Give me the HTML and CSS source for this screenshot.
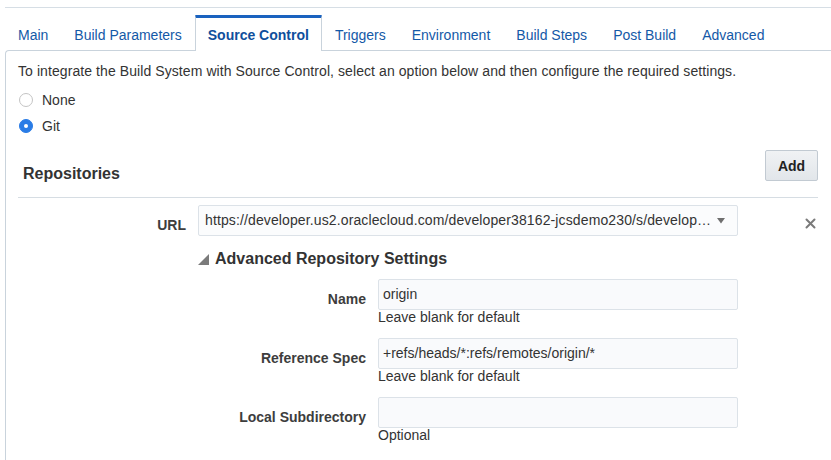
FILE: index.html
```html
<!DOCTYPE html>
<html lang="en">
<head>
<meta charset="utf-8">
<title>Source Control</title>
<link rel="stylesheet" href="styles.css">
</head>
<body>
<div class="topbar"></div>
<ul class="tabs">
  <li class="tab">Main</li>
  <li class="tab">Build Parameters</li>
  <li class="tab active">Source Control</li>
  <li class="tab">Triggers</li>
  <li class="tab">Environment</li>
  <li class="tab">Build Steps</li>
  <li class="tab">Post Build</li>
  <li class="tab">Advanced</li>
</ul>
<div class="panel">
  <p class="intro">To integrate the Build System with Source Control, select an option below and then configure the required settings.</p>
  <div class="radios">
    <label class="radio"><span class="dot"></span>None</label>
    <label class="radio"><span class="dot on"></span>Git</label>
  </div>
  <div class="section-head">
    <h2 class="section-title">Repositories</h2>
    <button class="btn">Add</button>
  </div>
  <div class="repo">
    <div class="url-row">
      <span class="label url-label">URL</span>
      <div class="select">
        <span class="select-text">https://developer.us2.oraclecloud.com/developer38162-jcsdemo230/s/develop…</span>
        <svg class="caret" width="8" height="6" viewBox="0 0 8 6"><polygon points="0,0 8,0 4,5.5" fill="#6f6f6f"/></svg>
      </div>
      <svg class="remove" width="11" height="11" viewBox="0 0 11 11"><path d="M1.5 1.5 L9.5 9.5 M9.5 1.5 L1.5 9.5" stroke="#7a7a7a" stroke-width="2" stroke-linecap="round"/></svg>
    </div>
    <div class="adv-head">
      <svg class="tri" width="11" height="11" viewBox="0 0 11 11"><polygon points="11,0 11,11 0,11" fill="#7b7b7b"/></svg>
      <span>Advanced Repository Settings</span>
    </div>
    <div class="field-row">
      <span class="label">Name</span>
      <div class="field">
        <div class="input">origin</div>
        <div class="help">Leave blank for default</div>
      </div>
    </div>
    <div class="field-row">
      <span class="label">Reference Spec</span>
      <div class="field">
        <div class="input">+refs/heads/*:refs/remotes/origin/*</div>
        <div class="help">Leave blank for default</div>
      </div>
    </div>
    <div class="field-row">
      <span class="label">Local Subdirectory</span>
      <div class="field">
        <div class="input"></div>
        <div class="help">Optional</div>
      </div>
    </div>
  </div>
</div>
</body>
</html>
```
FILE: styles.css
```css
* { box-sizing: border-box; }
html, body { margin: 0; padding: 0; background: #fff; }
body {
  font-family: "Liberation Sans", Arial, Helvetica, sans-serif;
  font-size: 14px;
  color: #333;
  overflow: hidden;
  width: 831px;
  height: 460px;
}
.topbar {
  height: 8px;
  margin-left: 5px;
  border-bottom: 1px solid #d6dee5;
}
.tabs {
  list-style: none;
  margin: 7px 0 0 5px;
  padding: 0;
  display: flex;
  position: relative;
  z-index: 1;
}
.tab {
  padding: 9px 12px 8px;
  line-height: 17px;
  color: #1459a7;
  border: 1px solid transparent;
  border-top: 3px solid transparent;
  border-bottom: none;
  height: 36px;
}
.tab.active {
  font-weight: bold;
  color: #0f4f9c;
  background: #fff;
  border-color: #c9d3dc;
  border-top-color: #1a62bf;
  border-radius: 1px 1px 0 0;
}
.panel {
  margin: -1px 0 0 5px;
  border-top: 1px solid #c9d3dc;
  border-left: 1px solid #c9d3dc;
  border-top-left-radius: 4px;
  padding: 12px 13px 40px 12px;
  height: 420px;
}
.intro {
  margin: 0;
  line-height: 17px;
  letter-spacing: 0.08px;
}
.radios {
  margin-top: 7px;
}
.radio {
  display: flex;
  align-items: center;
  height: 26px;
  padding-left: 1px;
}
.dot {
  width: 14px;
  height: 14px;
  border-radius: 50%;
  border: 1px solid #c4c4c4;
  background: #fff;
  margin-right: 9px;
  position: relative;
}
.dot.on {
  background: #2a7ce6;
  border-color: #2a7ce6;
}
.dot.on::after {
  content: "";
  position: absolute;
  width: 4px;
  height: 4px;
  border-radius: 50%;
  background: #fff;
  left: 4px;
  top: 4px;
}
.section-head {
  margin-top: 11px;
  display: flex;
  justify-content: space-between;
  align-items: flex-start;
  height: 48px;
  padding: 0 0 0 5px;
  border-bottom: 1px solid #d6dde3;
}
.section-title {
  margin: 15px 0 0;
  font-size: 16px;
  line-height: 17px;
  color: #333;
}
.btn {
  font-family: inherit;
  font-size: 14px;
  font-weight: bold;
  color: #222;
  width: 53px;
  height: 31px;
  padding: 0;
  border: 1px solid #c2cad2;
  border-radius: 2px;
  background: linear-gradient(#f0f2f4, #e2e6ea);
}
.repo {
  padding-top: 7px;
}
.url-row {
  display: flex;
  align-items: flex-start;
}
.label {
  font-weight: bold;
  color: #3d3d3d;
  text-align: right;
  line-height: 17px;
  padding-top: 12px;
  margin-right: 12px;
  flex: none;
}
.url-label { width: 168px; }
.select {
  width: 540px;
  height: 31px;
  border: 1px solid #dce2e8;
  border-radius: 2px;
  background: #fbfcfd;
  display: flex;
  align-items: center;
  padding: 0 12px 0 6px;
  justify-content: space-between;
}
.select-text {
  line-height: 17px;
  white-space: nowrap;
  letter-spacing: 0.12px;
}
.caret { flex: none; margin-top: 1px; }
.remove {
  margin: 13px 0 0 67px;
  flex: none;
}
.adv-head {
  margin: 13px 0 10px 180px;
  display: flex;
  align-items: center;
  height: 20px;
  font-size: 16px;
  font-weight: bold;
  color: #333;
}
.tri { margin: 1px 6px 0 0; }
.field-row {
  display: flex;
  align-items: flex-start;
  margin-bottom: 13px;
}
.field-row .label { width: 348px; }
.field { width: 360px; }
.input {
  height: 31px;
  border: 1px solid #dce2e8;
  border-radius: 2px;
  background: #f9fafc;
  padding: 0 4px;
  line-height: 29px;
  color: #333;
}
.help {
  line-height: 15px;
  color: #333;
}
```
